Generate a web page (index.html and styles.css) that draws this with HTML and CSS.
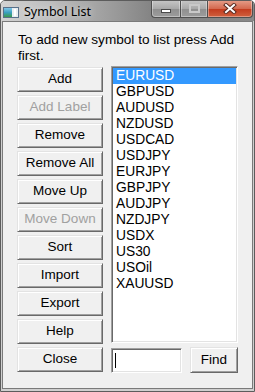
FILE: index.html
```html
<!DOCTYPE html>
<html>
  <head>
    <meta charset="utf-8">
    <title>Symbol List</title>
    <link rel="stylesheet" href="styles.css">
  </head>
  <body>
    <div class="window">
      <div class="titlebar">
        <svg class="app-icon" width="16" height="14" viewBox="0 0 16 14">
          <defs>
            <linearGradient id="ico" x1="0" y1="0" x2="0" y2="1">
              <stop offset="0" stop-color="#7fc6e8"/>
              <stop offset="0.5" stop-color="#3a9fc0"/>
              <stop offset="1" stop-color="#3c9a4c"/>
            </linearGradient>
          </defs>
          <rect x="0.5" y="2.5" width="15" height="10" fill="#e8eef2" stroke="#58708a"/>
          <rect x="1" y="3" width="8" height="9" fill="url(#ico)"/>
          <rect x="11" y="4" width="2" height="7" fill="#fff"/>
        </svg>
        <span class="title">Symbol List</span>
        <div class="caption">
          <span class="cap-btn cap-min">
            <svg width="10" height="4" viewBox="0 0 10 4"><rect x="0.5" y="0.5" width="9" height="3" fill="#fff" stroke="#4a4a4a"/></svg>
          </span>
          <span class="cap-btn cap-max">
            <svg width="11" height="9" viewBox="0 0 11 9"><rect x="1" y="1" width="9" height="7" fill="none" stroke="#c9c9c9" stroke-width="2"/></svg>
          </span>
          <span class="cap-btn cap-close">
            <svg width="14" height="11" viewBox="0 0 14 11">
              <path d="M3 2 L11 9 M11 2 L3 9" stroke="#5a2a20" stroke-width="4" stroke-linecap="square"/>
              <path d="M3 2 L11 9 M11 2 L3 9" stroke="#fff" stroke-width="2" stroke-linecap="square"/>
            </svg>
          </span>
        </div>
      </div>
      <div class="client">
        <p class="hint">To add new symbol to list press Add<br>first.</p>
        <div class="main">
          <div class="buttons">
            <button class="btn">Add</button>
            <button class="btn" disabled>Add Label</button>
            <button class="btn">Remove</button>
            <button class="btn">Remove All</button>
            <button class="btn">Move Up</button>
            <button class="btn" disabled>Move Down</button>
            <button class="btn">Sort</button>
            <button class="btn">Import</button>
            <button class="btn">Export</button>
            <button class="btn">Help</button>
            <button class="btn">Close</button>
          </div>
          <div class="side">
            <ul class="symbols">
              <li class="selected">EURUSD</li>
              <li>GBPUSD</li>
              <li>AUDUSD</li>
              <li>NZDUSD</li>
              <li>USDCAD</li>
              <li>USDJPY</li>
              <li>EURJPY</li>
              <li>GBPJPY</li>
              <li>AUDJPY</li>
              <li>NZDJPY</li>
              <li>USDX</li>
              <li>US30</li>
              <li>USOil</li>
              <li>XAUUSD</li>
            </ul>
            <div class="find-row">
              <span class="edit"><span class="caret"></span></span>
              <button class="btn find">Find</button>
            </div>
          </div>
        </div>
      </div>
    </div>
  </body>
</html>
```

FILE: styles.css
```css
body {
  margin: 0;
  font-family: "Liberation Sans", Arial, sans-serif;
}

/* window frame */
.window {
  width: 255px;
  height: 392px;
  box-sizing: border-box;
  border: 1px solid #5c5c5c;
  border-radius: 5px 5px 0 0;
  background: #cfcfcf;
  display: flex;
  flex-direction: column;
  overflow: hidden;
}

.titlebar {
  height: 20px;
  display: flex;
  align-items: center;
  background: linear-gradient(90deg, #d2d2d2 0%, #bdbdbd 20%, #9a9a9a 45%, #808080 62%, #888 100%);
}

.app-icon {
  margin-left: 2px;
  margin-top: 1px;
}

.title {
  margin-left: 5px;
  font-family: "Noto Sans", "Open Sans", sans-serif;
  font-size: 12.5px;
  color: #000;
  text-shadow: 0 0 6px rgba(255, 255, 255, 0.7);
}

.caption {
  margin-left: auto;
  margin-right: 1px;
  align-self: flex-start;
  margin-top: -1px;
  display: flex;
}

.cap-btn {
  height: 18px;
  box-sizing: border-box;
  border: 1px solid #4f4f4f;
  border-top: none;
  display: flex;
  align-items: center;
  justify-content: center;
  box-shadow: inset 0 0 0 1px rgba(255, 255, 255, 0.35);
}

.cap-min {
  width: 29px;
  border-radius: 0 0 0 4px;
  border-right: none;
  background: linear-gradient(#c8c8c8, #a9a9a9 50%, #8f8f8f 51%, #9c9c9c);
}

.cap-min svg {
  margin-top: 5px;
}

.cap-max {
  width: 27px;
  border-right: none;
  background: linear-gradient(#c8c8c8, #a9a9a9 50%, #8f8f8f 51%, #9c9c9c);
}

.cap-close {
  width: 46px;
  border-radius: 0 0 4px 0;
  background: linear-gradient(#e6a08c, #d46a50 50%, #c2391c 51%, #d0603e);
}

/* client area */
.client {
  flex: 1;
  margin: 0 1px 2px;
  border: 1px solid #7a7a7a;
  background: #f0f0f0;
  padding: 10px 14px 0 14px;
}

.hint {
  margin: 0;
  padding-left: 1px;
  font-size: 13.6px;
  line-height: 16px;
  color: #000;
  white-space: nowrap;
}

.main {
  margin-top: 2px;
  display: flex;
}

.buttons {
  width: 86px;
  padding-top: 1px;
  display: flex;
  flex-direction: column;
  gap: 3px;
}

.btn {
  height: 25px;
  margin: 0;
  padding: 0 0 2px;
  box-sizing: border-box;
  background: #f0f0f0;
  border: 1px solid;
  border-color: #e3e3e3 #696969 #696969 #e3e3e3;
  box-shadow: inset 1px 1px #fff, inset -1px -1px #a0a0a0;
  font-family: "Liberation Sans", Arial, sans-serif;
  font-size: 13.5px;
  color: #000;
  border-radius: 0;
}

.btn:disabled {
  color: #a0a0a0;
}

.side {
  width: 127px;
  margin-left: 8px;
  display: flex;
  flex-direction: column;
}

.symbols {
  height: 277px;
  box-sizing: border-box;
  margin: 0;
  padding: 0;
  list-style: none;
  background: #fff;
  border: 1px solid;
  border-color: #a0a0a0 #fff #fff #a0a0a0;
  box-shadow: inset 1px 1px #696969, inset -1px -1px #e3e3e3;
  padding: 1px;
}

.symbols li {
  height: 16px;
  line-height: 16px;
  padding-left: 3px;
  font-size: 13.8px;
  color: #000;
}

.symbols li.selected {
  background: #3399ff;
  color: #fff;
}

.find-row {
  margin-top: 4px;
  display: flex;
  justify-content: space-between;
  align-items: flex-start;
}

.edit {
  width: 71px;
  height: 25px;
  margin-top: 1px;
  box-sizing: border-box;
  background: #fff;
  border: 1px solid;
  border-color: #a0a0a0 #fff #fff #a0a0a0;
  box-shadow: inset 1px 1px #696969, inset -1px -1px #e3e3e3;
  padding: 4px 0 0 3px;
}

.caret {
  display: block;
  width: 1px;
  height: 15px;
  background: #000;
}

.find {
  width: 48px;
  height: 26px;
}
```
